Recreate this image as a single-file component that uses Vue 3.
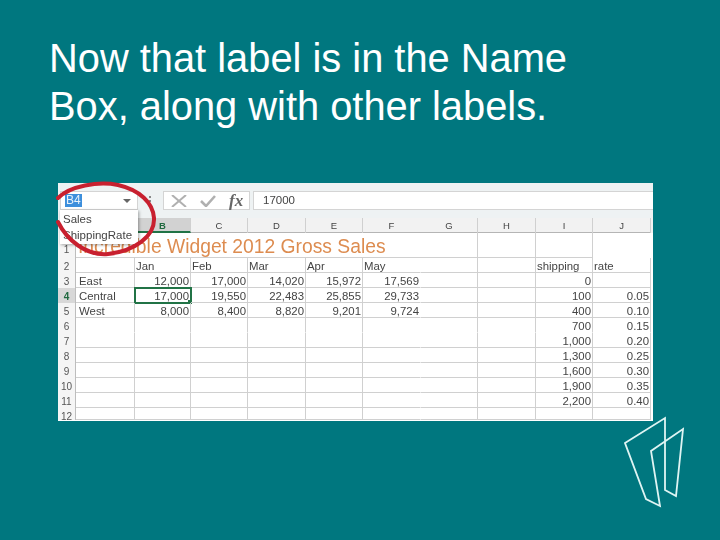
<template>
  <div class="slide">
    <h1 class="title">Now that label is in the Name<br />Box, along with other labels.</h1>

    <div class="sheet">
      <div class="toolbar">
        <div class="name-box">
          <span class="name-value">B4</span>
          <span class="name-arrow"></span>
        </div>
        <div class="dots"></div>
        <div class="fx-box">
          <svg width="16" height="12" viewBox="0 0 16 12" class="fx-icon">
            <path d="M1 0l14 12M15 0L1 12" stroke="#b0b0b0" stroke-width="2" fill="none" />
          </svg>
          <svg width="16" height="12" viewBox="0 0 16 12" class="fx-icon">
            <path d="M1 6l5 5L15 1" stroke="#b0b0b0" stroke-width="2.6" fill="none" />
          </svg>
          <span class="fx-text">fx</span>
        </div>
        <div class="formula">17000</div>
      </div>

      <div class="col-heads">
        <div class="corner"></div>
        <div
          v-for="col in columns"
          :key="col"
          class="col-head"
          :class="{ active: col === 'B', merged: col === 'F' }"
        >{{ col === 'A' ? '' : col }}</div>
        <div class="col-rest"></div>
      </div>

      <div class="row title-row">
        <div class="row-num">1</div>
        <div class="sheet-title">Incredible Widget 2012 Gross Sales</div>
        <div class="cell"></div>
        <div class="cell"></div>
      </div>

      <div
        v-for="row in rows"
        :key="row.num"
        class="row"
        :class="{ clipped: row.num === 12 }"
      >
        <div class="row-num" :class="{ active: row.num === 4 }">{{ row.num }}</div>
        <div
          v-for="(value, i) in row.cells"
          :key="i"
          class="cell"
          :class="{
            text: isText(value),
            first: i === 0,
            selected: row.num === 4 && i === 1,
            merged: i === 5,
            'no-line': noLine(row.num)
          }"
        >{{ value }}</div>
      </div>

      <div class="dropdown">
        <div>Sales</div>
        <div>ShippingRate</div>
      </div>
    </div>

    <svg class="overlay" width="720" height="540" viewBox="0 0 720 540">
      <path
        class="ring"
        d="M58 198C70 186 98 181 118 185C140 190 153 203 154 218C155 236 135 251 108 254C86 256 67 240 58 222"
      />
      <path
        class="logo"
        d="M625 443L665 418V490L676 496L683 429L651 451L660 506L646 499Z"
      />
    </svg>
  </div>
</template>

<script setup>
const columns = ['A', 'B', 'C', 'D', 'E', 'F', 'G', 'H', 'I', 'J']

const rows = [
  { num: 2, cells: ['', 'Jan', 'Feb', 'Mar', 'Apr', 'May', '', '', 'shipping', 'rate'] },
  { num: 3, cells: ['East', '12,000', '17,000', '14,020', '15,972', '17,569', '', '', '0', ''] },
  { num: 4, cells: ['Central', '17,000', '19,550', '22,483', '25,855', '29,733', '', '', '100', '0.05'] },
  { num: 5, cells: ['West', '8,000', '8,400', '8,820', '9,201', '9,724', '', '', '400', '0.10'] },
  { num: 6, cells: ['', '', '', '', '', '', '', '', '700', '0.15'] },
  { num: 7, cells: ['', '', '', '', '', '', '', '', '1,000', '0.20'] },
  { num: 8, cells: ['', '', '', '', '', '', '', '', '1,300', '0.25'] },
  { num: 9, cells: ['', '', '', '', '', '', '', '', '1,600', '0.30'] },
  { num: 10, cells: ['', '', '', '', '', '', '', '', '1,900', '0.35'] },
  { num: 11, cells: ['', '', '', '', '', '', '', '', '2,200', '0.40'] },
  { num: 12, cells: ['', '', '', '', '', '', '', '', '', ''] }
]

const isText = (value) => /^[A-Za-z]/.test(value)
const noLine = (num) => num === 6
</script>

<style>
body {
  margin: 0;
}
</style>

<style scoped>
.slide {
  position: relative;
  width: 720px;
  height: 540px;
  overflow: hidden;
  background: #00777f;
  font-family: "Liberation Sans", Arial, sans-serif;
}

.title {
  margin: 0;
  padding: 34px 0 0 49px;
  height: 183px;
  box-sizing: border-box;
  font-size: 39.85px;
  font-weight: 400;
  line-height: 48px;
  color: #fff;
}

.sheet {
  position: relative;
  width: 595px;
  height: 238px;
  margin-left: 58px;
  overflow: hidden;
  background: #fff;
  color: #444;
  font-size: 11.4px;
  filter: blur(0.3px);
}

.toolbar {
  display: flex;
  align-items: center;
  height: 35px;
  padding: 0 0 0 2px;
  box-sizing: border-box;
  background: #eef2f3;
}

.name-box {
  display: flex;
  align-items: center;
  justify-content: space-between;
  width: 78px;
  height: 19px;
  padding: 0 4px;
  box-sizing: border-box;
  background: #fff;
  border: 1px solid #d4d4d4;
}

.name-value {
  padding: 0 1px;
  background: #3d8fdc;
  color: #e8f2fb;
  font-size: 12px;
  line-height: 13px;
}

.name-arrow {
  width: 0;
  height: 0;
  margin-right: 2px;
  border-left: 4px solid transparent;
  border-right: 4px solid transparent;
  border-top: 4px solid #666;
}

.dots {
  width: 2px;
  height: 10px;
  margin: 0 12px 0 11px;
  background: repeating-linear-gradient(#888 0 2px, transparent 2px 4px);
}

.fx-box {
  display: flex;
  align-items: center;
  gap: 13px;
  width: 87px;
  height: 19px;
  padding-left: 7px;
  box-sizing: border-box;
  background: #fff;
  border: 1px solid #d4d4d4;
}

.fx-icon {
  flex: none;
}

.fx-text {
  font-family: "Liberation Serif", serif;
  font-size: 17px;
  font-style: italic;
  font-weight: 700;
  color: #666;
}

.formula {
  flex: 1;
  height: 19px;
  margin-left: 3px;
  padding-left: 9px;
  box-sizing: border-box;
  background: #fff;
  border: 1px solid #d4d4d4;
  border-right: 0;
  font-size: 11.5px;
  line-height: 17px;
}

.col-heads {
  display: grid;
  grid-template-columns: 18px 59px 56px 57px 58px 57px 58px 57px 58px 57px 58px 2px;
  height: 15px;
  background: #f2f2f2;
  border-bottom: 1px solid #b5b5b5;
  box-sizing: border-box;
}

.corner {
  background: #f2f2f2;
}

.col-head {
  text-align: center;
  line-height: 15px;
  font-size: 9.5px;
  color: #444;
  border-right: 1px solid #d0d0d0;
  box-sizing: border-box;
}

.col-head.merged {
  border-right-color: transparent;
}

.col-head.active {
  background: #d2d2d2;
  color: #20693f;
  font-weight: 700;
  border-bottom: 2px solid #217346;
  height: 15px;
}

.col-rest {
  background: #f2f2f2;
}

.row {
  display: grid;
  grid-template-columns: 18px 59px 56px 57px 58px 57px 58px 57px 58px 57px 58px;
  grid-template-rows: 15px;
}

.row.clipped {
  grid-template-rows: 12px;
  overflow: hidden;
}

.title-row {
  grid-template-columns: 18px 402px 58px 57px 58px;
  grid-template-rows: 25px;
}

.sheet-title {
  padding-left: 2px;
  font-size: 19.3px;
  line-height: 27px;
  white-space: nowrap;
  color: #dd8c50;
  border-right: 1px solid #d0d0d0;
  border-bottom: 1px solid #d0d0d0;
  box-sizing: border-box;
}

.row-num {
  text-align: center;
  font-size: 10px;
  line-height: 17px;
  color: #555;
  background: #f5f5f5;
  border-right: 1px solid #bdbdbd;
  box-sizing: border-box;
}

.title-row .row-num {
  line-height: 33px;
}

.row-num.active {
  background: #d8d8d8;
  color: #20693f;
  font-weight: 700;
}

.cell {
  position: relative;
  padding: 0 1px 0 2px;
  line-height: 17px;
  text-align: right;
  white-space: nowrap;
  border-right: 1px solid #d0d0d0;
  border-bottom: 1px solid #d0d0d0;
  box-sizing: border-box;
}

.cell.merged {
  border-right-color: transparent;
}

.cell.text {
  text-align: left;
  padding-left: 1px;
}

.cell.text.first {
  padding-left: 3px;
}

.cell.no-line {
  border-bottom-color: transparent;
}

.cell.selected {
  outline: 2px solid #217346;
  outline-offset: -1px;
}

.cell.selected::after {
  content: "";
  position: absolute;
  right: -2px;
  bottom: -2px;
  width: 4px;
  height: 4px;
  background: #217346;
}

.dropdown {
  position: absolute;
  top: 27px;
  left: 2px;
  width: 78px;
  height: 34px;
  padding: 1px 0 0 3px;
  box-sizing: border-box;
  background: #fff;
  box-shadow: 1px 1px 3px rgba(0, 0, 0, 0.35);
  font-size: 11.5px;
  line-height: 16px;
}

.overlay {
  position: absolute;
  top: 0;
  left: 0;
  pointer-events: none;
}

.ring {
  fill: none;
  stroke: #c8202f;
  stroke-width: 4;
  stroke-linecap: round;
}

.logo {
  fill: none;
  stroke: #dff4f3;
  stroke-width: 1.8;
}
</style>
